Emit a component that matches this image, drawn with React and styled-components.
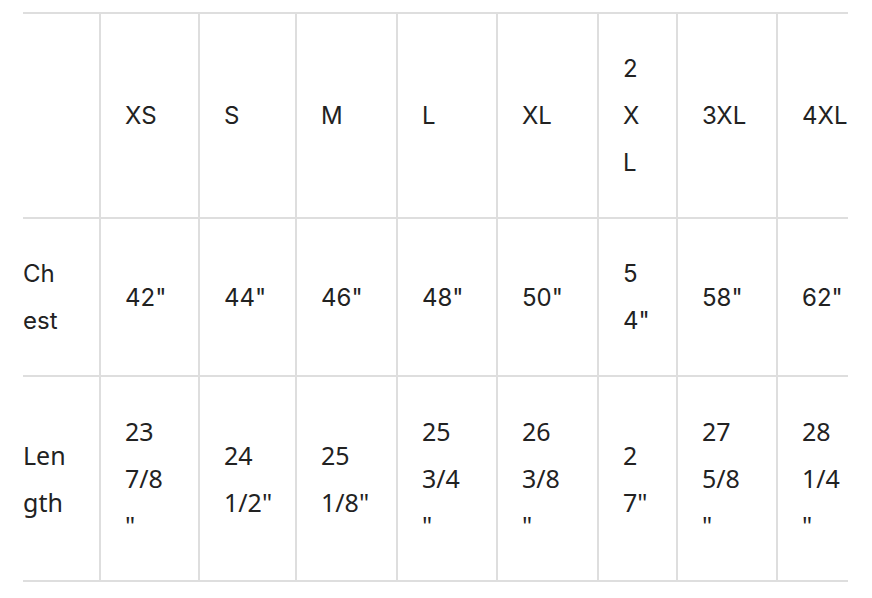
import React from "react";
import styled, { createGlobalStyle } from "styled-components";

const GlobalStyle = createGlobalStyle`
  html, body { margin: 0; padding: 0; background: #fff; }
  body { font-family: Inter, "Liberation Sans", Arial, sans-serif; color: #222; }
`;

const Page = styled.div`
  padding: 12px 0 0 23px;
`;

const Viewport = styled.div`
  width: 825px;
  overflow: hidden;
`;

const Grid = styled.div`
  display: grid;
  grid-template-columns: 76px 99px 97px 101px 100px 101px 79px 100px 100px;
  width: max-content;
  border-top: 2px solid #dedede;
`;

const Cell = styled.div`
  box-sizing: border-box;
  display: flex;
  flex-direction: column;
  justify-content: center;
  padding: 31px 24px 31px ${(p) => (p.$first ? "0" : "24px")};
  border-left: ${(p) => (p.$first ? "none" : "2px solid #dedede")};
  border-bottom: 2px solid #dedede;
  font-family: ${(p) =>
    p.$geo
      ? '"Noto Sans", "Open Sans", sans-serif'
      : 'Inter, "Liberation Sans", Arial, sans-serif'};
  font-size: ${(p) => (p.$geo ? "25px" : "24px")};
  line-height: 47px;
  color: #222;
  white-space: nowrap;
`;

const Line = styled.span`
  display: block;
`;

const sizes = [["XS"], ["S"], ["M"], ["L"], ["XL"], ["2", "X", "L"], ["3XL"], ["4XL"]];
const chest = [["42\""], ["44\""], ["46\""], ["48\""], ["50\""], ["5", "4\""], ["58\""], ["62\""]];
const length = [
  ["23", "7/8", "\""],
  ["24", "1/2\""],
  ["25", "1/8\""],
  ["25", "3/4", "\""],
  ["26", "3/8", "\""],
  ["2", "7\""],
  ["27", "5/8", "\""],
  ["28", "1/4", "\""],
];

const rows = [
  { label: [], cells: sizes, geo: false },
  { label: ["Ch", "est"], cells: chest, geo: false },
  { label: ["Len", "gth"], cells: length, geo: true },
];

function Lines({ lines }) {
  return lines.map((l, i) => <Line key={i}>{l}</Line>);
}

export default function App() {
  return (
    <>
      <GlobalStyle />
      <Page>
        <Viewport>
          <Grid role="table">
            {rows.map((row, r) => (
              <React.Fragment key={r}>
                <Cell $first $geo={row.geo} role="rowheader">
                  <Lines lines={row.label} />
                </Cell>
                {row.cells.map((c, i) => (
                  <Cell key={i} $geo={row.geo} role="cell">
                    <Lines lines={c} />
                  </Cell>
                ))}
              </React.Fragment>
            ))}
          </Grid>
        </Viewport>
      </Page>
    </>
  );
}
